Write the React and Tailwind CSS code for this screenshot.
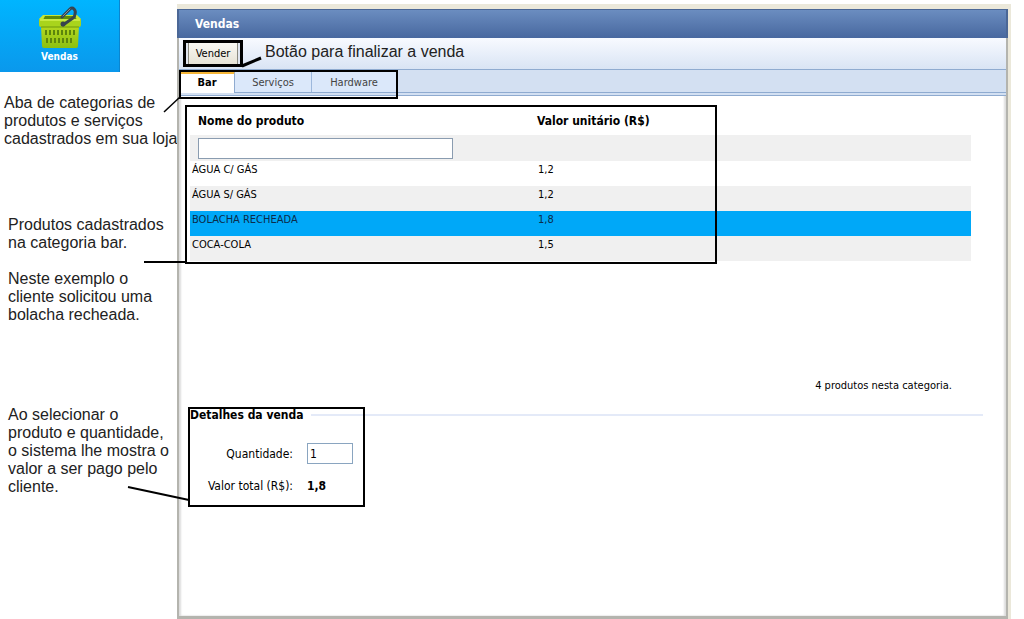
import React, { useState } from 'react';

const CATEGORIES = ['Bar', 'Serviços', 'Hardware'];

const PRODUCTS = [
  { id: 1, category: 'Bar', name: 'ÁGUA C/ GÁS', price: 1.2 },
  { id: 2, category: 'Bar', name: 'ÁGUA S/ GÁS', price: 1.2 },
  { id: 3, category: 'Bar', name: 'BOLACHA RECHEADA', price: 1.8 },
  { id: 4, category: 'Bar', name: 'COCA-COLA', price: 1.5 },
];

const formatPrice = (value) => String(Math.round(value * 100) / 100).replace('.', ',');

function BasketIcon() {
  return (
    <svg className="w-11 h-11" viewBox="0 0 44 44" fill="none" aria-hidden="true">
      <defs>
        <linearGradient id="basket" x1="0" y1="0" x2="0" y2="1">
          <stop offset="0" stopColor="#b4d820" />
          <stop offset="1" stopColor="#8cc010" />
        </linearGradient>
      </defs>
      <path d="M5 9h34l4 4H1z" fill="#c4e636" />
      <path d="M7 10h30l2 4H5z" fill="#5d8a0a" />
      <path d="M3 20h38l-1 20q0 2-2 2H6q-2 0-2-2z" fill="url(#basket)" />
      <path d="M1 13h42v6q0 2-2 2H3q-2 0-2-2z" fill="#a9d41c" />
      <path d="M2 14h40" stroke="#d3f04e" strokeWidth="1.5" />
      <path d="M3 21h38" stroke="#6f9a0c" />
      <path
        d="M8 24v5M12 24v5M16 24v5M20 24v5M24 24v5M28 24v5M32 24v5M36 24v5M9 32v5M13 32v5M17 32v5M21 32v5M25 32v5M29 32v5M33 32v5"
        stroke="#5c850c"
        strokeWidth="2"
      />
      {/* Handle */}
      <path d="M24 11L32 3q2-2 4 0t1 5q0 2-2 4L25 19" stroke="#37444e" strokeWidth="3" strokeLinecap="round" strokeLinejoin="round" />
      <path d="M25 10L32 3" stroke="#82909b" strokeLinecap="round" />
      <circle cx="25" cy="18" r="2.5" fill="#37444e" />
    </svg>
  );
}

function App() {
  const [category, setCategory] = useState('Bar');
  const [search, setSearch] = useState('');
  const [selectedId, setSelectedId] = useState(3);
  const [quantity, setQuantity] = useState('1');

  const products = PRODUCTS.filter((product) => product.category === category);
  const visibleProducts = products.filter((product) => product.name.includes(search.toUpperCase()));
  const selected = PRODUCTS.find((product) => product.id === selectedId);
  const total = selected.price * (Number(quantity) || 0);

  return (
    <div className="relative flex min-h-screen bg-white text-black">
      {/* Notes */}
      <aside className="w-[177px] shrink-0 font-['Liberation_Sans',sans-serif] text-base leading-[18px] text-[#222]">
        <a
          href="#vendas"
          className="flex h-[72px] w-[120px] flex-col items-center border-r border-[#0a86d0] bg-linear-to-b from-[#00b5ff] to-[#0a98ec] pt-[6px] font-['DejaVu_Sans_Condensed','DejaVu_Sans',sans-serif] text-[10px] leading-[14px] font-bold text-white"
        >
          <BasketIcon />
          Vendas
        </a>
        <p className="mt-[22px] pl-1 whitespace-nowrap">
          Aba de categorias de<br />produtos e serviços<br />cadastrados em sua loja
        </p>
        <p className="mt-[68px] pl-2 whitespace-nowrap">
          Produtos cadastrados<br />na categoria bar.
        </p>
        <p className="mt-[18px] pl-2 whitespace-nowrap">
          Neste exemplo o<br />cliente solicitou uma<br />bolacha recheada.
        </p>
        <p className="mt-[82px] pl-2 whitespace-nowrap">
          Ao selecionar o<br />produto e quantidade,<br />o sistema lhe mostra o<br />valor a ser pago pelo<br />cliente.
        </p>
      </aside>

      {/* Sales window */}
      <div className="mt-1 mr-[13px] flex min-w-0 flex-1 flex-col border-t-[5px] border-r-[3px] border-[#ebe8da] font-['DejaVu_Sans_Condensed','DejaVu_Sans',sans-serif] text-[11px]">
        <main className="flex flex-1 flex-col border-x-2 border-b-3 border-[#b4b4ae] bg-white shadow-[inset_2px_0_2px_#ddd,inset_-2px_0_2px_#ddd]">
          <h1 className="-mx-[2px] flex h-[29px] items-center border-x-2 border-t border-[#4b6796] bg-linear-to-b from-[#6b8dc0] to-[#48689f] pl-4 text-xs font-bold text-white">
            Vendas
          </h1>

          {/* Toolbar */}
          <div className="flex h-8 items-center border-b border-[#8fabd0] bg-linear-to-b from-[#f8faff] to-[#d9e4f4] pl-1">
            <div className="-mt-px border-3 border-black bg-[#dfe5ef] px-[2px]">
              <button type="button" className="block h-[21px] w-[50px] border-x border-[#8a8a80] bg-linear-to-b from-[#f9f8f3] to-[#e6e3d6] pt-[2px]">
                Vender
              </button>
            </div>
            <span className="-mt-1 ml-[22px] font-['Liberation_Sans',sans-serif] text-base leading-[18px] text-[#222]">
              Botão para finalizar a venda
            </span>
          </div>

          {/* Category tabs */}
          <div className="relative border-b border-[#8fabd0] bg-[#d3e0f2] pb-[2px]">
            <div role="tablist" className="flex h-[23px] items-stretch border-b border-[#8fabd0] pl-px">
              {CATEGORIES.map((name) => (
                <button
                  key={name}
                  type="button"
                  role="tab"
                  aria-selected={category === name}
                  onClick={() => setCategory(name)}
                  className={
                    category === name
                      ? '-mb-px w-[55px] border-t-4 border-r border-t-[#f5b638] border-r-[#8fabd0] bg-white font-bold'
                      : 'mt-[2px] flex-none border-r border-[#9db8dc] bg-[#dbe8fa] pt-[2px] text-[#444] ' +
                        (name === 'Serviços' ? 'w-[77px]' : 'w-[85px]')
                  }
                >
                  {name}
                </button>
              ))}
            </div>
            <div className="pointer-events-none absolute top-0 left-0 h-[29px] w-[219px] border-2 border-black" />
          </div>

          {/* Products */}
          <section className="relative mr-[35px] ml-[11px]">
            <table className="w-full table-fixed border-collapse text-left">
              <thead>
                <tr className="h-[39px] text-xs">
                  <th className="w-[346px] pt-[11px] pl-2 font-bold">Nome do produto</th>
                  <th className="pt-[11px] pl-px font-bold">Valor unitário (R$)</th>
                </tr>
              </thead>
              <tbody>
                <tr className="h-[26px] bg-[#f0f0f0]">
                  <td className="p-0 pl-2">
                    <input
                      type="text"
                      aria-label="Nome do produto"
                      value={search}
                      onChange={(e) => setSearch(e.target.value)}
                      className="block h-[21px] w-[255px] border border-[#8a9cb0] bg-white px-1"
                    />
                  </td>
                  <td></td>
                </tr>
                {visibleProducts.map((product, index) => (
                  <tr
                    key={product.id}
                    onClick={() => setSelectedId(product.id)}
                    className={
                      'h-[25px] align-top leading-[18px] ' +
                      (product.id === selectedId
                        ? 'bg-[#00a8f8] text-[#0b2c4a]'
                        : index % 2
                          ? 'bg-[#f0f0f0]'
                          : 'bg-white')
                    }
                  >
                    <td className="p-0 pl-[2px]">{product.name}</td>
                    <td className="p-0 pl-[2px]">{formatPrice(product.price)}</td>
                  </tr>
                ))}
              </tbody>
            </table>
            <div className="pointer-events-none absolute top-[9px] -left-[5px] h-[159px] w-[532px] border-2 border-black" />
          </section>

          <p className="mt-[116px] mr-[54px] text-right leading-[18px]">
            {products.length} produtos nesta categoria.
          </p>

          {/* Sale details */}
          <section className="relative mt-3 mr-[23px] ml-[9px] h-[100px]">
            <div className="flex items-center gap-2 pl-[2px]">
              <h2 className="text-xs leading-4 font-bold">Detalhes da venda</h2>
              <div className="h-[2px] flex-1 bg-[#e4eaf8]" />
            </div>
            <div className="mt-5 grid w-44 grid-cols-[105px_1fr] items-center gap-x-[14px] gap-y-[14px] text-xs">
              <label htmlFor="quantity" className="text-right">Quantidade:</label>
              <input
                id="quantity"
                type="text"
                value={quantity}
                onChange={(e) => setQuantity(e.target.value)}
                className="h-[21px] w-[46px] border border-[#8aa5c0] bg-white px-[2px]"
              />
              <span className="text-right">Valor total (R$):</span>
              <strong>{formatPrice(total)}</strong>
            </div>
            <div className="pointer-events-none absolute top-0 left-0 h-[100px] w-[177px] border-2 border-black" />
          </section>
        </main>
      </div>

      {/* Lines from the notes to the framed areas */}
      <svg className="pointer-events-none absolute top-0 left-0 h-[520px] w-[270px]" viewBox="0 0 270 520" stroke="#000" fill="none">
        <path d="M242 66L261 58" strokeWidth="3" />
        <path d="M164 112L180 97" strokeWidth="1.5" />
        <path d="M144 262H187" strokeWidth="2" />
        <path d="M128 487L189 500" strokeWidth="2" />
      </svg>
    </div>
  );
}

export default App;
